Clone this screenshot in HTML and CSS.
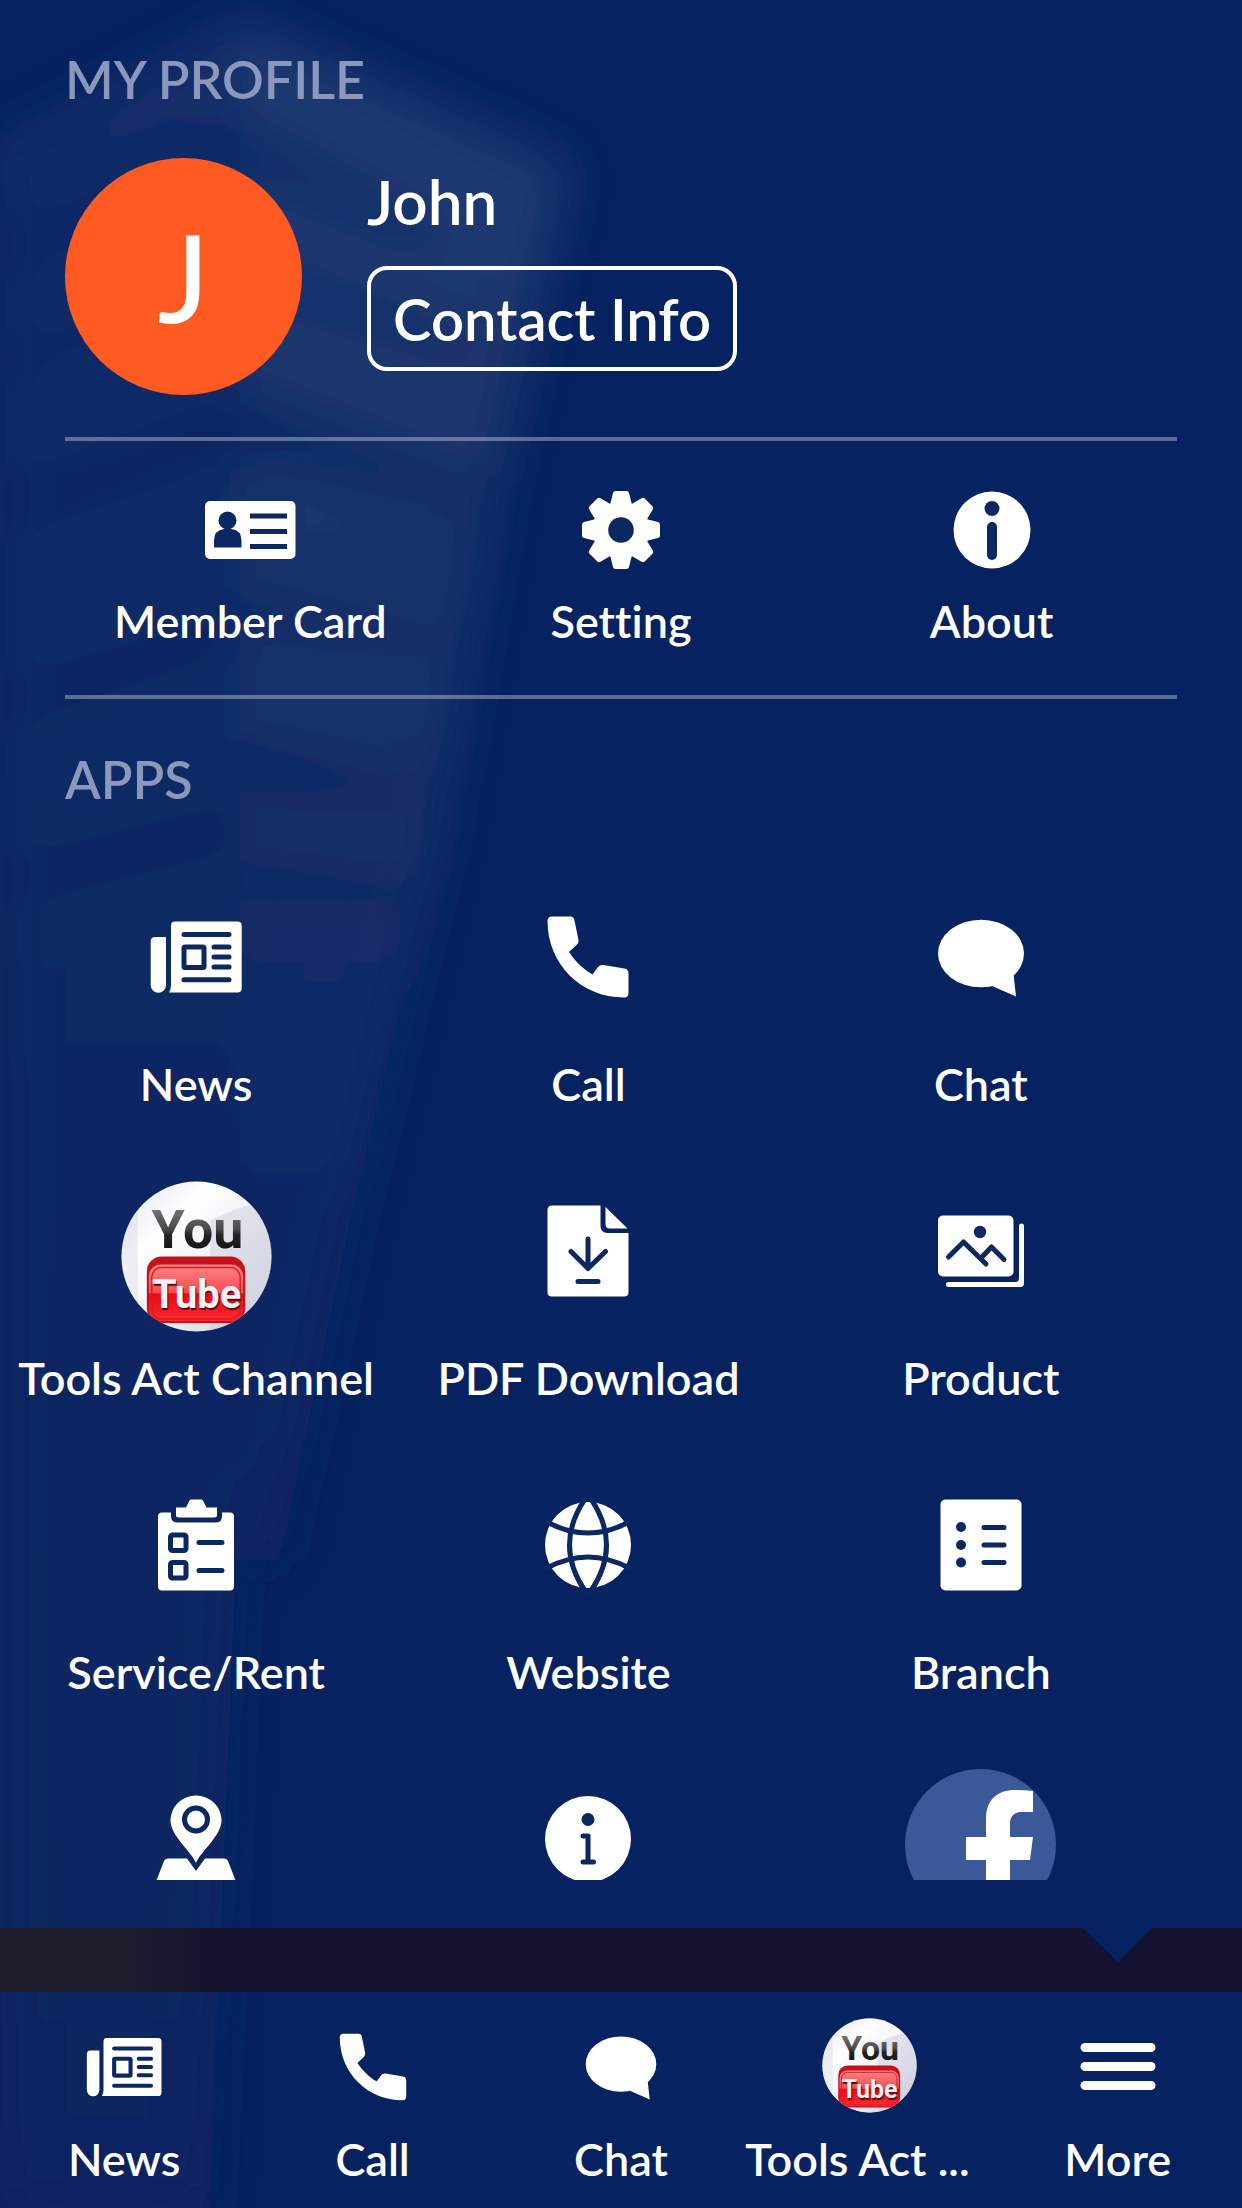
FILE: index.html
```html
<!DOCTYPE html>
<html lang="en">
<head>
    <meta charset="UTF-8">
    <meta name="viewport" content="width=device-width, initial-scale=1.0">
    <title>More</title>
    <link rel="stylesheet" href="styles.css">
</head>
<body>
    <!-- Shared icons -->
    <svg class="sprite" aria-hidden="true">
        <defs>
            <linearGradient id="yt-bg" x1="0" y1="0" x2="1" y2="1">
                <stop offset="0" stop-color="#e4e5f0"/>
                <stop offset="0.3" stop-color="#ffffff"/>
                <stop offset="0.6" stop-color="#eeeef5"/>
                <stop offset="1" stop-color="#cfd0e0"/>
            </linearGradient>
            <linearGradient id="yt-dark" x1="0" y1="0" x2="0" y2="1">
                <stop offset="0" stop-color="#8a8a8a"/>
                <stop offset="0.5" stop-color="#4a4a4a"/>
                <stop offset="0.6" stop-color="#222222"/>
                <stop offset="1" stop-color="#0c0c0c"/>
            </linearGradient>
            <linearGradient id="yt-red" x1="0" y1="0" x2="0" y2="1">
                <stop offset="0" stop-color="#ff8585"/>
                <stop offset="0.5" stop-color="#f84a50"/>
                <stop offset="0.52" stop-color="#e80812"/>
                <stop offset="1" stop-color="#ff2a30"/>
            </linearGradient>
            <clipPath id="yt-clip"><circle cx="76" cy="76" r="75.5"/></clipPath>
        </defs>
        <symbol id="icon-news" viewBox="0 0 100 100">
            <path d="M9 30H20V78a7.6 7.6 0 0 1-15.3 0V34.500Q4.700 30 9 30Z"/>
            <path d="M29 14.500H91.500Q95.700 14.500 95.700 18.700V81.300Q95.700 85.500 91.500 85.500H23Q25 82 25 78V18.700Q25 14.500 29 14.500Z"/>
            <g class="cut">
                <path d="M38 27.500H83M68 40H83M68 50H83M68 60H83M38 72.800H83"/>
                <rect x="38" y="40" width="20" height="20.500" rx="1"/>
            </g>
        </symbol>
        <symbol id="icon-call" viewBox="0 0 100 100">
            <path d="M14 9.500H32Q36 9.500 36.500 13.500L40.500 33Q41 36 38.500 38L31 45C37 54 46 63 54.500 67.500L60 60Q62 57.500 65.500 58L86.500 61.500Q90.500 62 90.500 66.500V86Q90.500 90.500 86 90.500C43 90.500 9.500 57 9.500 14Q9.500 9.500 14 9.500Z"/>
        </symbol>
        <symbol id="icon-chat" viewBox="0 0 100 100">
            <ellipse cx="50" cy="46.500" rx="43" ry="33.800"/>
            <path d="M61 79L85 89.500L82.500 67Z"/>
        </symbol>
        <symbol id="icon-youtube" viewBox="0 0 152 152">
            <g clip-path="url(#yt-clip)">
                <rect width="152" height="152" fill="url(#yt-bg)"/>
                <path d="M90 40Q125 22 152 20V152H90Z" fill="#c9cbdc" opacity="0.45"/>
                <path d="M0 0H17V152H0Z" fill="#c9cbdc" opacity="0.3"/>
                <rect x="26" y="76" width="99" height="67" rx="15" fill="#c8101a"/>
                <rect x="28" y="84" width="95" height="57" rx="12" fill="url(#yt-red)"/>
                <rect x="31" y="87" width="89" height="52" rx="10" fill="none" stroke="#c9232b" stroke-width="1.500"/>
            </g>
            <text class="yt-word yt-you" x="77" y="67" fill="url(#yt-dark)">You</text>
            <text class="yt-word yt-tube" x="76" y="128" fill="#f1f1f8">Tube</text>
        </symbol>
    </svg>

    <!-- Blurred tower behind the menu -->
    <svg class="backdrop" viewBox="0 0 1242 2208" preserveAspectRatio="none" aria-hidden="true">
        <defs>
            <filter id="soft" filterUnits="userSpaceOnUse" x="-100" y="-100" width="1442" height="2408"><feGaussianBlur stdDeviation="24"/></filter>
            <linearGradient id="side" x1="0" y1="0" x2="0" y2="1">
                <stop offset="0" stop-color="#122d69"/>
                <stop offset="0.5" stop-color="#0d2863"/>
                <stop offset="1" stop-color="#082461"/>
            </linearGradient>
            <linearGradient id="tower" x1="0" y1="0" x2="0" y2="1">
                <stop offset="0" stop-color="#1f3a72"/>
                <stop offset="0.35" stop-color="#19336b"/>
                <stop offset="0.6" stop-color="#122c67"/>
                <stop offset="1" stop-color="#072361"/>
            </linearGradient>
        </defs>
        <g filter="url(#soft)">
            <path d="M0 140L240 20V1450L210 2208H0Z" fill="url(#side)"/>
            <path d="M240 20L570 165L500 480L440 840L350 1220L280 1560H240Z" fill="url(#tower)"/>
            <g fill="#092461" opacity="0.6">
                <path d="M240 120L440 230V255L240 175Z"/>
                <path d="M240 250L480 345V360L240 285Z"/>
                <path d="M240 385L490 485V515L240 465Z"/>
                <path d="M240 590L460 640V655L240 625Z"/>
                <path d="M240 740L440 790V805L240 790Z"/>
                <path d="M240 860L410 880V910L240 900Z"/>
                <path d="M0 230L240 120V170L0 280Z"/>
                <path d="M0 350L240 250V285L0 385Z"/>
                <path d="M0 480L240 390V460L0 540Z"/>
                <path d="M0 680L240 610V650L0 730Z"/>
                <path d="M0 860L240 800V850L0 910Z"/>
            </g>
        </g>
    </svg>

    <main class="panel">
        <h2 class="section-title">MY PROFILE</h2>
        <section class="profile">
            <div class="avatar">J</div>
            <div class="profile-info">
                <p class="profile-name">John</p>
                <button type="button" class="contact-button">Contact Info</button>
            </div>
        </section>

        <nav class="shortcuts">
            <a href="#member-card" class="item">
                <svg class="icon-small" viewBox="0 10 100 80" aria-hidden="true">
                    <rect x="5" y="21" width="90.500" height="58" rx="5"/>
                    <g class="hole">
                        <circle cx="27.500" cy="40.500" r="9"/>
                        <path d="M14 67.500V61Q14 50 24 49H31.500Q41.500 50 41.500 61V67.500Z"/>
                        <path d="M50 33.500H87V38.500H50ZM50 49H87V54H50ZM50 64H87V69H50Z"/>
                    </g>
                </svg>
                <span class="label">Member Card</span>
            </a>
            <a href="#setting" class="item">
                <svg class="icon-small" viewBox="0 10 100 80" aria-hidden="true">
                    <defs><path id="tooth" d="M39 25L42 13Q42.500 11 44.500 11H55.500Q57.500 11 58 13L61 25Z"/></defs>
                    <circle cx="50" cy="50" r="28.500"/>
                    <use href="#tooth"/>
                    <use href="#tooth" transform="rotate(45 50 50)"/>
                    <use href="#tooth" transform="rotate(90 50 50)"/>
                    <use href="#tooth" transform="rotate(135 50 50)"/>
                    <use href="#tooth" transform="rotate(180 50 50)"/>
                    <use href="#tooth" transform="rotate(225 50 50)"/>
                    <use href="#tooth" transform="rotate(270 50 50)"/>
                    <use href="#tooth" transform="rotate(315 50 50)"/>
                    <circle class="hole" cx="50" cy="50" r="12.800"/>
                </svg>
                <span class="label">Setting</span>
            </a>
            <a href="#about" class="item">
                <svg class="icon-small" viewBox="0 10 100 80" aria-hidden="true">
                    <circle cx="50" cy="50" r="38.500"/>
                    <g class="hole">
                        <circle cx="50" cy="28.500" r="7.500"/>
                        <rect x="45" y="42" width="10" height="38" rx="5"/>
                    </g>
                </svg>
                <span class="label">About</span>
            </a>
        </nav>

        <h2 class="section-title">APPS</h2>
        <section class="apps">
            <a href="#news" class="item">
                <span class="app-icon"><svg class="icon"><use href="#icon-news"/></svg></span>
                <span class="label">News</span>
            </a>
            <a href="#call" class="item">
                <span class="app-icon"><svg class="icon"><use href="#icon-call"/></svg></span>
                <span class="label">Call</span>
            </a>
            <a href="#chat" class="item">
                <span class="app-icon"><svg class="icon"><use href="#icon-chat"/></svg></span>
                <span class="label">Chat</span>
            </a>
            <a href="#channel" class="item">
                <svg class="app-logo"><use href="#icon-youtube"/></svg>
                <span class="label">Tools Act Channel</span>
            </a>
            <a href="#pdf" class="item">
                <span class="app-icon">
                    <svg class="icon" viewBox="0 0 100 100">
                        <path d="M14 4.500H62.500V25Q62.500 32 69.500 32H90.500V91Q90.500 95.500 86 95.500H14Q9.500 95.500 9.500 91V9Q9.500 4.500 14 4.500Z"/>
                        <path d="M67.500 6L89.500 27.500H72Q67.500 27.500 67.500 23Z"/>
                        <path class="cut" d="M50 38V67M33 50.500L50 67.500L67.500 50.500M40 80.500H60"/>
                    </svg>
                </span>
                <span class="label">PDF Download</span>
            </a>
            <a href="#product" class="item">
                <span class="app-icon">
                    <svg class="icon" viewBox="0 0 100 100">
                        <rect x="7" y="14.500" width="75.500" height="61" rx="5"/>
                        <path d="M88 25a2.500 2.500 0 0 1 5 0V82Q93 86 89.500 86H17.500a2.500 2.500 0 0 1 0-5H84Q88 81 88 77Z"/>
                        <circle class="hole" cx="49" cy="31" r="6.200"/>
                        <path class="cut" d="M17.500 56L32.500 41L55 63M50 57L60.500 46L73 58.500"/>
                    </svg>
                </span>
                <span class="label">Product</span>
            </a>
            <a href="#service" class="item">
                <span class="app-icon">
                    <svg class="icon" viewBox="0 0 100 100">
                        <path d="M16 17.500H25V21Q25 27.500 31 27.500H70Q76 27.500 76 21V17.500H84Q88 17.500 88 21.500V91.500Q88 95.500 84 95.500H16Q12 95.500 12 91.500V21.500Q12 17.500 16 17.500Z"/>
                        <path d="M30 12.500H40L43.500 5.500Q44 4.500 45 4.500H55.500Q56.500 4.500 57 5.500L60.500 12.500H71V20Q71 22.500 68.500 22.500H32.500Q30 22.500 30 20Z"/>
                        <g class="cut">
                            <rect x="24.500" y="40" width="15.500" height="15.500" rx="2"/>
                            <rect x="24.500" y="67.500" width="15.500" height="15.500" rx="2"/>
                            <path d="M53 47.500H76M53 75.500H76"/>
                        </g>
                    </svg>
                </span>
                <span class="label">Service/Rent</span>
            </a>
            <a href="#website" class="item">
                <span class="app-icon">
                    <svg class="icon" viewBox="0 0 100 100">
                        <circle cx="50" cy="50" r="43"/>
                        <path class="cut" d="M47 4Q16 50 47 96M53 4Q84 50 53 96M9 27Q50 49 91 27M9 73Q50 51 91 73"/>
                    </svg>
                </span>
                <span class="label">Website</span>
            </a>
            <a href="#branch" class="item">
                <span class="app-icon">
                    <svg class="icon" viewBox="0 0 100 100">
                        <rect x="9.500" y="4.500" width="81" height="91" rx="5"/>
                        <g class="hole">
                            <circle cx="30" cy="32" r="5"/>
                            <circle cx="30" cy="50" r="5"/>
                            <circle cx="30" cy="67.500" r="5"/>
                        </g>
                        <path class="cut" d="M53 32.500H73M53 50H73M53 67.500H73"/>
                    </svg>
                </span>
                <span class="label">Branch</span>
            </a>
            <a href="#map" class="item" aria-label="Map">
                <span class="app-icon">
                    <svg class="icon" viewBox="0 0 100 100">
                        <path d="M50 74C46 63 24.500 47 24.500 31.500a25.500 25 0 0 1 51 0C75.500 47 54 63 50 74Z"/>
                        <circle class="cut" cx="50" cy="30.500" r="11.500"/>
                        <path d="M22 69.500H41L50 82L59 69.500H78Q81 69.500 82 72L89 90Q90 93 87 95H13Q10 93 11 90L18 72Q19 69.500 22 69.500Z"/>
                    </svg>
                </span>
            </a>
            <a href="#info" class="item" aria-label="Info">
                <span class="app-icon">
                    <svg class="icon" viewBox="0 0 100 100">
                        <circle cx="50" cy="50" r="43"/>
                        <circle class="hole" cx="50" cy="30.500" r="6.500"/>
                        <path class="cut" d="M45 47H50V73M45 73H55.500"/>
                    </svg>
                </span>
            </a>
            <a href="#facebook" class="item" aria-label="Facebook">
                <svg class="app-logo" viewBox="0 0 151 151">
                    <circle cx="75.500" cy="75.500" r="75.500" fill="#3b5998"/>
                    <path d="M81 151V91H61V68H81V50C81 31 92 21 110 21C118 21 128 22 128 22V43H117C108 43 105 48 105 55V68H128L125 91H105V151Z"/>
                </svg>
            </a>
        </section>
    </main>

    <div class="gap"></div>

    <nav class="tab-bar">
        <a href="#news" class="item">
            <span class="tab-icon"><svg class="icon"><use href="#icon-news"/></svg></span>
            <span class="label">News</span>
        </a>
        <a href="#call" class="item">
            <span class="tab-icon"><svg class="icon"><use href="#icon-call"/></svg></span>
            <span class="label">Call</span>
        </a>
        <a href="#chat" class="item">
            <span class="tab-icon"><svg class="icon"><use href="#icon-chat"/></svg></span>
            <span class="label">Chat</span>
        </a>
        <a href="#channel" class="item">
            <svg class="tab-logo"><use href="#icon-youtube"/></svg>
            <span class="label label-start">Tools Act ...</span>
        </a>
        <a href="#more" class="item">
            <span class="tab-icon">
                <svg class="icon" viewBox="0 0 82 82">
                    <rect x="3.500" y="17" width="75" height="9" rx="4.500"/>
                    <rect x="3.500" y="36" width="75" height="9" rx="4.500"/>
                    <rect x="3.500" y="55" width="75" height="9" rx="4.500"/>
                </svg>
            </span>
            <span class="label">More</span>
        </a>
    </nav>
</body>
</html>
```

FILE: styles.css
```css
/* Base Reset and Variables */
* {
    margin: 0;
    padding: 0;
    box-sizing: border-box;
}

:root {
    --navy: #062260;
    --cutout: #0c2862;
    --line: rgba(255, 255, 255, 0.33);
    --muted: #8b98bb;
    --orange: #ff5a22;
}

body {
    height: 100vh;
    display: flex;
    flex-direction: column;
    overflow: hidden;
    background: var(--navy);
    color: #fff;
    font-family: 'Lato', sans-serif;
    font-weight: 600;
    font-variant-ligatures: none;
    line-height: 1.2;
}

svg {
    fill: currentColor;
}

.sprite {
    position: absolute;
    width: 0;
    height: 0;
}

.backdrop {
    position: absolute;
    inset: 0;
    width: 100%;
    height: 100%;
    z-index: -1;
}

/* Parts knocked out of the white icons */
.cut {
    fill: none;
    stroke: var(--cutout);
    stroke-width: 5;
    stroke-linecap: round;
    stroke-linejoin: round;
}

.hole {
    fill: var(--cutout);
}

.yt-word {
    font-family: 'Roboto', sans-serif;
    font-weight: 700;
    text-anchor: middle;
}

.yt-you { font-size: 54px; }

.yt-tube {
    font-size: 40px;
    text-shadow: 1px 2px 1px #5a0a10;
}

/* Panel */
.panel {
    flex: 1;
    min-height: 0;
    display: flex;
    flex-direction: column;
    padding: 48px 65px;
}

.section-title {
    font-size: 52px;
    line-height: 62px;
    font-weight: 600;
    color: var(--muted);
}

.profile {
    display: flex;
    gap: 65px;
    padding: 48px 0 42px;
}

.avatar {
    width: 237px;
    height: 237px;
    border-radius: 50%;
    background: var(--orange);
    display: flex;
    align-items: center;
    justify-content: center;
    font-size: 122px;
    font-weight: 500;
}

.profile-info {
    display: flex;
    flex-direction: column;
    align-items: flex-start;
    gap: 29px;
    padding-top: 7px;
}

.profile-name {
    font-size: 62px;
    line-height: 72px;
}

.contact-button {
    padding: 15px 22px;
    border: 4px solid #fff;
    border-radius: 20px;
    background: none;
    color: inherit;
    font: inherit;
    font-size: 58px;
    line-height: 67px;
    cursor: pointer;
}

.item {
    display: flex;
    flex-direction: column;
    align-items: center;
    gap: 20px;
    color: inherit;
    text-decoration: none;
}

.label {
    font-size: 45px;
    line-height: 53px;
    white-space: nowrap;
}

/* Shortened names keep to the left of their cell */
.label-start {
    align-self: flex-start;
}

/* Shortcuts */
.shortcuts {
    display: grid;
    grid-template-columns: repeat(3, 1fr);
    padding: 49px 0 47px;
    margin-bottom: 49px;
    border-top: 4px solid var(--line);
    border-bottom: 4px solid var(--line);
}

.shortcuts .item {
    gap: 25px;
}

.icon-small {
    width: 100px;
    height: 80px;
}

.apps {
    flex: 1;
    min-height: 0;
    display: grid;
    grid-template-columns: repeat(3, 1fr);
    align-content: start;
    row-gap: 70px;
    margin: 77px 0 0 -65px;
    overflow: hidden;
}

.app-icon,
.tab-icon {
    display: flex;
    align-items: center;
}

.app-icon {
    height: 151px;
    padding-bottom: 12px;
}

.app-icon .icon {
    width: 100px;
    height: 100px;
}

.app-logo {
    width: 151px;
    height: 151px;
}

/* Strip between the panel and the tab bar */
.gap {
    height: 64px;
    display: grid;
    grid-template-columns: repeat(5, 1fr);
    background: linear-gradient(to right, #1f1e2c 0, #1e1c2c 10%, #141131 18%);
}

.gap::after {
    content: '';
    grid-column: 5;
    justify-self: center;
    width: 70px;
    height: 34px;
    background: var(--navy);
    clip-path: polygon(0 0, 100% 0, 50% 100%);
}

/* Tab Bar */
.tab-bar {
    display: grid;
    grid-template-columns: repeat(5, 1fr);
    height: 216px;
    padding-top: 26px;
}

.tab-icon {
    height: 95px;
    padding-top: 3px;
}

.tab-icon .icon {
    width: 82px;
    height: 82px;
}

.tab-logo {
    width: 95px;
    height: 95px;
}
```
